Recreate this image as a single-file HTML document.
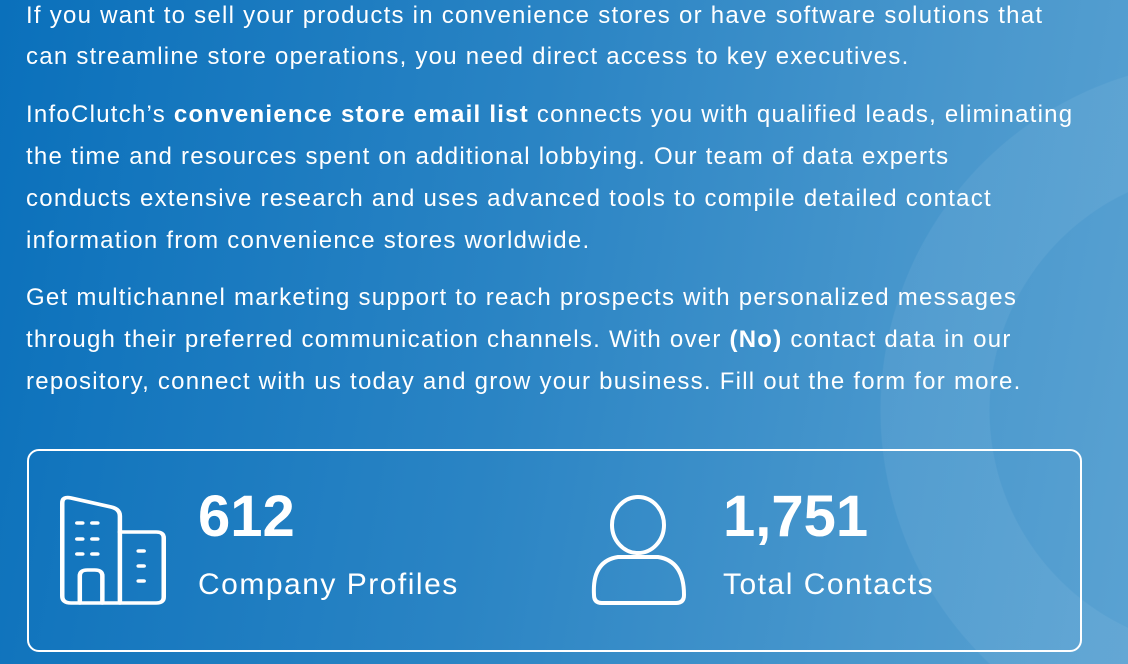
<!DOCTYPE html>
<html><head><meta charset="utf-8"><style>
html,body{margin:0;padding:0;width:1128px;height:664px;overflow:hidden;}
body{position:relative;
background:
radial-gradient(circle at 1230px 410px, transparent 240px, rgba(255,255,255,0.06) 241px, rgba(255,255,255,0.06) 349px, transparent 350px),
linear-gradient(100deg,#0a70bb 0%,#2a84c4 45%,#4a98cd 80%,#5aa2d2 100%);
font-family:"Liberation Sans",sans-serif;color:#fff;}
.l{position:absolute;left:26px;white-space:nowrap;font-size:24px;letter-spacing:1.25px;line-height:30px;}
.box{position:absolute;left:27px;top:449px;width:1055px;height:203px;border:2px solid #fff;border-radius:12px;box-sizing:border-box;}
.num{position:absolute;font-size:58px;font-weight:bold;line-height:60px;}
.lab{position:absolute;font-size:30px;line-height:36px;letter-spacing:1.5px;}
</style></head><body>
<div class="l" style="top:1px">If you want to sell your products in convenience stores or have software solutions that</div>
<div class="l" style="top:42px">can streamline store operations, you need direct access to key executives.</div>
<div class="l" style="top:100px">InfoClutch’s <b>convenience store email list</b> connects you with qualified leads, eliminating</div>
<div class="l" style="top:142px">the time and resources spent on additional lobbying. Our team of data experts</div>
<div class="l" style="top:184px">conducts extensive research and uses advanced tools to compile detailed contact</div>
<div class="l" style="top:226px">information from convenience stores worldwide.</div>
<div class="l" style="top:283px">Get multichannel marketing support to reach prospects with personalized messages</div>
<div class="l" style="top:325px">through their preferred communication channels. With over <b>(No)</b> contact data in our</div>
<div class="l" style="top:367px">repository, connect with us today and grow your business. Fill out the form for more.</div>
<div class="box"></div>
<svg style="position:absolute;left:56px;top:493px" width="114" height="114" viewBox="0 0 91 114" preserveAspectRatio="none" fill="none" stroke="#fff" stroke-width="3.6" stroke-linecap="round" stroke-linejoin="round">
<path d="M5 10 Q5 3 12 5 L44 14 Q51 16 51 23 L51 110 L12 110 Q5 110 5 103 Z"/>
<path d="M51 39 L80 39 Q86 39 86 45 L86 104 Q86 110 80 110 L51 110"/>
<path d="M19 110 L19 83 Q19 77 25 77 L31 77 Q37 77 37 83 L37 110"/>
<path d="M17 30h4M29 30h4M17 46h4M29 46h4M17 61h4M29 61h4M66 58h4M66 73h4M66 88h4"/>
</svg>
<div class="num" style="left:198px;top:487px">612</div>
<div class="lab" style="left:198px;top:567px">Company Profiles</div>
<svg style="position:absolute;left:590px;top:495px" width="100" height="112" viewBox="0 0 100 112" fill="none" stroke="#fff" stroke-width="4">
<ellipse cx="48" cy="30" rx="26" ry="28"/>
<path d="M4 100 Q2 66 28 62 L68 62 Q94 66 94 100 Q94 108 86 108 L12 108 Q4 108 4 100 Z"/>
</svg>
<div class="num" style="left:723px;top:487px">1,751</div>
<div class="lab" style="left:723px;top:567px">Total Contacts</div>
</body></html>
